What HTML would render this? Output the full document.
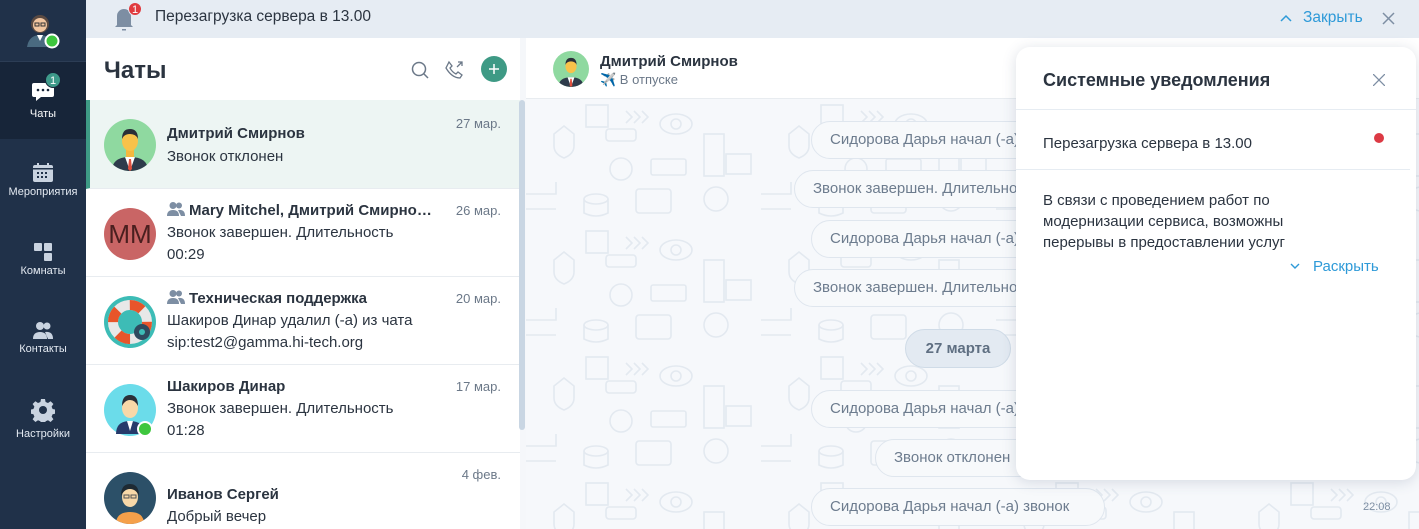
<!DOCTYPE html>
<html><head><meta charset="utf-8"><style>
*{box-sizing:border-box;margin:0;padding:0}
html,body{width:1419px;height:529px;overflow:hidden}
body{font-family:"Liberation Sans","DejaVu Sans",sans-serif;background:#f5f7fa;position:relative;color:#2a3440}
.abs{position:absolute}
.side{left:0;top:0;width:86px;height:529px;background:#203149}
.nav{position:absolute;left:0;width:86px;text-align:center;color:#fff;font-size:11px}
.nav svg{display:block;margin:0 auto 4px}
.topbar{left:86px;top:0;width:1333px;height:38px;background:#e6ecf3}
.list{left:86px;top:38px;width:434px;height:491px;background:#fff}
.item{position:absolute;left:0;width:434px;border-bottom:1px solid #e8ecf0}
.av{position:absolute;left:18px;width:52px;height:52px;border-radius:50%;overflow:hidden}
.name{position:absolute;left:81px;font-weight:bold;font-size:15px;color:#2b3440;white-space:nowrap}
.msg{position:absolute;left:81px;font-size:15px;color:#2b3440;line-height:22px}
.date{position:absolute;right:19px;font-size:13px;color:#6b7888}
.bubble{position:absolute;height:38px;border:1px solid #dfe6ee;border-radius:19px;background:#f7f9fb;font-size:15px;color:#6d7c8e;line-height:36px;padding-left:18px;white-space:nowrap;overflow:hidden}
</style></head><body>
<div class="abs side"></div>
<div class="abs" style="left:0;top:61px;width:86px;height:1px;background:#2c3d55"></div>
<div class="abs" style="left:0;top:62px;width:86px;height:77px;background:#172539"></div>
<svg class="abs" style="left:25px;top:11px" width="36" height="38" viewBox="0 0 36 38">
<circle cx="15" cy="13" r="9" fill="#5a4a42"/><circle cx="15" cy="14" r="7" fill="#f2c6a0"/>
<rect x="10" y="12" width="4" height="3" fill="none" stroke="#333" stroke-width="1"/><rect x="16" y="12" width="4" height="3" fill="none" stroke="#333" stroke-width="1"/>
<path d="M2 36 Q4 24 15 24 Q26 24 28 36Z" fill="#4a6a80"/><path d="M12 24 L15 30 L18 24Z" fill="#fff"/>
<circle cx="27" cy="30" r="6.5" fill="#3ec63e" stroke="#fff" stroke-width="2"/></svg>
<div class="nav" style="top:82px">
<svg width="22" height="20" viewBox="0 0 22 20"><path d="M2 1h18a2 2 0 0 1 2 2v10a2 2 0 0 1-2 2H9l-5 4v-4H2a2 2 0 0 1-2-2V3a2 2 0 0 1 2-2z" fill="#fff"/><circle cx="6" cy="8" r="1.3" fill="#172539"/><circle cx="11" cy="8" r="1.3" fill="#172539"/><circle cx="16" cy="8" r="1.3" fill="#172539"/></svg>
<span style="position:relative;top:2px">Чаты</span></div>
<div class="abs" style="left:45px;top:72px;width:16px;height:16px;border-radius:50%;background:#3e9a8a;color:#fff;font-size:11px;text-align:center;line-height:16px;border:1px solid #172539">1</div>
<div class="nav" style="top:163px;color:#e4eaf2"><svg width="20" height="19" viewBox="0 0 20 19"><rect x="0" y="2" width="20" height="17" rx="2" fill="#c9d3e0"/><rect x="4" y="0" width="2" height="4" fill="#c9d3e0"/><rect x="14" y="0" width="2" height="4" fill="#c9d3e0"/><rect x="0" y="5" width="20" height="1.5" fill="#203149"/><g fill="#203149"><rect x="4" y="9" width="2" height="2"/><rect x="8" y="9" width="2" height="2"/><rect x="12" y="9" width="2" height="2"/><rect x="4" y="13" width="2" height="2"/><rect x="8" y="13" width="2" height="2"/><rect x="12" y="13" width="2" height="2"/></g></svg>Мероприятия</div>
<div class="nav" style="top:243px;color:#e4eaf2"><svg width="18" height="18" viewBox="0 0 18 18"><rect x="0" y="0" width="8" height="8" rx="1" fill="#c9d3e0"/><rect x="10" y="0" width="8" height="8" rx="1" fill="#c9d3e0"/><rect x="10" y="10" width="8" height="8" rx="1" fill="#c9d3e0"/></svg>Комнаты</div>
<div class="nav" style="top:322px;color:#e4eaf2"><svg width="20" height="17" viewBox="0 0 20 17"><circle cx="7" cy="4" r="4" fill="#c9d3e0"/><circle cx="14" cy="4" r="3.5" fill="#c9d3e0"/><path d="M0 17q0-7 7-7t7 7z" fill="#c9d3e0"/><path d="M12 10q8 -1 8 7h-5z" fill="#c9d3e0"/></svg>Контакты</div>
<div class="nav" style="top:398px;color:#e4eaf2"><svg width="24" height="24" viewBox="0 0 24 24"><path fill="#c9d3e0" d="M10 1h4l.6 3 2.4 1 2.6-1.8 2.8 2.8-1.8 2.6 1 2.4 3 .6v4l-3 .6-1 2.4 1.8 2.6-2.8 2.8-2.6-1.8-2.4 1-.6 3h-4l-.6-3-2.4-1-2.6 1.8-2.8-2.8 1.8-2.6-1-2.4-3-.6v-4l3-.6 1-2.4-1.8-2.6 2.8-2.8 2.6 1.8 2.4-1z"/><circle cx="12" cy="12" r="4" fill="#203149"/></svg><span style="position:relative;top:2px">Настройки</span></div>

<div class="abs topbar"></div>
<svg class="abs" style="left:112px;top:2px" width="32" height="30" viewBox="0 0 32 30"><path d="M5 23v-9a7 7 0 0 1 14 0v9l2 2H3z" fill="#7d8ea3"/><rect x="10" y="27" width="4" height="1.5" fill="#7d8ea3"/><circle cx="23" cy="7" r="6.5" fill="#e03a3e" stroke="#e6ecf3" stroke-width="1"/><text x="23" y="11" font-size="11" fill="#fff" text-anchor="middle" font-family="Liberation Sans">1</text></svg>
<div class="abs" style="left:155px;top:8px;font-size:15.5px;color:#2b3440">Перезагрузка сервера в 13.00</div>
<svg class="abs" style="left:1280px;top:14px" width="12" height="8" viewBox="0 0 12 8"><path d="M1 7l5-5 5 5" fill="none" stroke="#2e9ad8" stroke-width="1.5"/></svg>
<div class="abs" style="left:1303px;top:9px;font-size:15.5px;color:#2e9ad8">Закрыть</div>
<svg class="abs" style="left:1382px;top:12px" width="13" height="13" viewBox="0 0 13 13"><path d="M1 1l11 11M12 1L1 12" stroke="#7d8ea3" stroke-width="1.5"/></svg>

<div class="abs list">
<div class="abs" style="left:18px;top:19px;font-size:24px;font-weight:bold;color:#2b3440">Чаты</div>
<svg class="abs" style="left:325px;top:23px" width="18" height="18" viewBox="0 0 18 18"><circle cx="8" cy="8" r="6.5" fill="none" stroke="#6b7888" stroke-width="1.5"/><path d="M13 13l4 4" stroke="#6b7888" stroke-width="1.5"/></svg>
<svg class="abs" style="left:359px;top:22px" width="19" height="19" viewBox="0 0 19 19"><path d="M4 2l3 4-2 2q2 4 6 6l2-2 4 3-2 3q-8 0-14-10z" fill="none" stroke="#6b7888" stroke-width="1.3"/><path d="M12 7l5-5M13 2h4v4" fill="none" stroke="#6b7888" stroke-width="1.3"/></svg>
<div class="abs" style="left:395px;top:18px;width:26px;height:26px;border-radius:50%;background:#3e9a85"></div>
<svg class="abs" style="left:401px;top:24px" width="14" height="14"><path d="M7 2v10M2 7h10" stroke="#fff" stroke-width="1.5"/></svg>

<div class="item" style="top:62px;height:89px;background:#edf5f3;border-left:4px solid #3e9a85">
<div class="av" style="left:14px;top:19px;background:#8fd9a0"><svg width="52" height="52" viewBox="0 0 52 52"><path d="M8 52q0-14 18-14t18 14z" fill="#2e3b4b"/><path d="M21 38l5 14 5-14z" fill="#fff"/><path d="M25 40h2l1 10-2 2-2-2z" fill="#e0503e"/><rect x="22" y="30" width="8" height="8" fill="#f5b83e"/><ellipse cx="26" cy="22" rx="8" ry="10" fill="#f8c24a"/><path d="M18 20q0-10 8-10t8 10q-2-5-8-5t-8 5z" fill="#2a2f38"/></svg></div>
<div class="name" style="left:77px;top:25px">Дмитрий Смирнов</div>
<div class="msg" style="left:77px;top:46px">Звонок отклонен</div>
<div class="date" style="top:16px">27 мар.</div></div>

<div class="item" style="top:151px;height:88px">
<div class="av" style="top:19px;background:#c96565;color:#4a1f1f;font-size:26px;text-align:center;line-height:52px">MM</div>
<svg class="abs" style="left:81px;top:13px" width="18" height="14" viewBox="0 0 18 14"><circle cx="6" cy="3.5" r="3.5" fill="#7d8ea3"/><circle cx="12" cy="3.5" r="3" fill="#7d8ea3"/><path d="M0 14q0-6 6-6t6 6z" fill="#7d8ea3"/><path d="M11 8q7-1 7 6h-4z" fill="#7d8ea3"/></svg>
<div class="name" style="left:103px;top:13px;width:248px;overflow:hidden;text-overflow:ellipsis">Mary Mitchel, Дмитрий Смирнов, Иван</div>
<div class="msg" style="top:33px">Звонок завершен. Длительность<br>00:29</div>
<div class="date" style="top:14px">26 мар.</div></div>

<div class="item" style="top:239px;height:88px">
<div class="av" style="top:19px;background:#3dbcb6"><svg width="52" height="52" viewBox="0 0 52 52"><circle cx="26" cy="26" r="17" fill="none" stroke="#e8e8e8" stroke-width="10"/><circle cx="26" cy="26" r="17" fill="none" stroke="#e8552a" stroke-width="10" stroke-dasharray="13.3 13.3"/><circle cx="38" cy="36" r="8" fill="#2e4a5e"/><circle cx="38" cy="36" r="3" fill="#3dbcb6"/></svg></div>
<svg class="abs" style="left:81px;top:13px" width="18" height="14" viewBox="0 0 18 14"><circle cx="6" cy="3.5" r="3.5" fill="#7d8ea3"/><circle cx="12" cy="3.5" r="3" fill="#7d8ea3"/><path d="M0 14q0-6 6-6t6 6z" fill="#7d8ea3"/><path d="M11 8q7-1 7 6h-4z" fill="#7d8ea3"/></svg>
<div class="name" style="left:103px;top:13px">Техническая поддержка</div>
<div class="msg" style="top:33px">Шакиров Динар удалил (-а) из чата<br>sip:test2@gamma.hi-tech.org</div>
<div class="date" style="top:14px">20 мар.</div></div>

<div class="item" style="top:327px;height:88px">
<div class="av" style="top:19px;background:#6bdcea;overflow:visible"><svg width="52" height="52" viewBox="0 0 52 52"><path d="M12 50q0-13 14-13t14 13z" fill="#263a6a"/><path d="M23 37l3 10 3-10z" fill="#fff"/><ellipse cx="26" cy="24" rx="8" ry="10" fill="#f8d8a8"/><path d="M18 22q0-11 8-11t8 11q-3-6-8-6t-8 6z" fill="#2a2f38"/></svg></div>
<div class="abs" style="left:51px;top:56px;width:16px;height:16px;border-radius:50%;background:#3ec63e;border:2px solid #fff"></div>
<div class="name" style="top:13px">Шакиров Динар</div>
<div class="msg" style="top:33px">Звонок завершен. Длительность<br>01:28</div>
<div class="date" style="top:14px">17 мар.</div></div>

<div class="item" style="top:415px;height:88px;border:none">
<div class="av" style="top:19px;background:#2c5068"><svg width="52" height="52" viewBox="0 0 52 52"><path d="M12 52q0-12 14-12t14 12z" fill="#f5a04a"/><ellipse cx="26" cy="25" rx="8" ry="10" fill="#f8d8a8"/><path d="M17 24q0-12 9-12t9 12q-3-7-9-7t-9 7z" fill="#1e2a33"/><rect x="20" y="23" width="5" height="3" fill="none" stroke="#555" stroke-width="1"/><rect x="27" y="23" width="5" height="3" fill="none" stroke="#555" stroke-width="1"/></svg></div>
<div class="name" style="top:33px">Иванов Сергей</div>
<div class="msg" style="top:53px">Добрый вечер</div>
<div class="date" style="top:14px">4 фев.</div></div>
</div>
<div class="abs" style="left:519px;top:100px;width:6px;height:330px;background:#c9d6e3;border-radius:3px"></div>

<!-- pattern bg -->
<svg class="abs" style="left:526px;top:99px" width="893" height="430">
<defs><pattern id="p" width="235" height="126" patternUnits="userSpaceOnUse">
<g fill="none" stroke="#e3e9f0" stroke-width="1.6">
<path d="M28 35l10-8 10 8v12q0 8-10 12q-10-4-10-12z"/>
<rect x="60" y="6" width="22" height="22"/>
<path d="M100 12l6 6-6 6M108 12l6 6-6 6M116 12l6 6-6 6"/>
<ellipse cx="150" cy="25" rx="16" ry="10"/><circle cx="150" cy="25" r="5"/>
<rect x="80" y="30" width="30" height="12" rx="3"/>
<circle cx="95" cy="70" r="11"/>
<rect x="125" y="60" width="35" height="16" rx="2"/>
<rect x="178" y="35" width="20" height="42"/>
<rect x="200" y="55" width="25" height="20"/>
<path d="M0 95h30v-12M0 110h30"/>
<ellipse cx="70" cy="100" rx="12" ry="5"/><path d="M58 100v14q12 6 24 0v-14"/>
<rect x="110" y="90" width="35" height="24" rx="3"/>
<circle cx="190" cy="100" r="12"/>
</g></pattern></defs>
<rect width="893" height="430" fill="#f6f8fb"/><rect width="893" height="430" fill="url(#p)"/>
</svg>

<div class="abs" style="left:526px;top:38px;width:893px;height:61px;background:#fff;border-bottom:1px solid #e8ecf0"></div>
<div class="abs" style="left:553px;top:51px;width:36px;height:36px;border-radius:50%;overflow:hidden;background:#8fd9a0"><svg width="36" height="36" viewBox="0 0 52 52"><path d="M8 52q0-14 18-14t18 14z" fill="#2e3b4b"/><path d="M21 38l5 14 5-14z" fill="#fff"/><path d="M25 40h2l1 10-2 2-2-2z" fill="#e0503e"/><ellipse cx="26" cy="22" rx="8" ry="10" fill="#f8c24a"/><path d="M18 20q0-10 8-10t8 10q-2-5-8-5t-8 5z" fill="#2a2f38"/></svg></div>
<div class="abs" style="left:600px;top:53px;font-size:15px;font-weight:bold;color:#2b3440">Дмитрий Смирнов</div>
<div class="abs" style="left:600px;top:72px;font-size:13px;color:#6b7888">✈️ В отпуске</div>

<div class="bubble" style="left:811px;top:121px;width:300px">Сидорова Дарья начал (-а) звонок</div>
<div class="bubble" style="left:794px;top:170px;width:300px">Звонок завершен. Длительность</div>
<div class="bubble" style="left:811px;top:220px;width:300px">Сидорова Дарья начал (-а) звонок</div>
<div class="bubble" style="left:794px;top:269px;width:300px">Звонок завершен. Длительность</div>
<div class="abs" style="left:905px;top:329px;width:106px;height:39px;border-radius:20px;background:#e3eaf2;border:1px solid #cfdbe7;font-size:15px;font-weight:bold;color:#5f6f82;text-align:center;line-height:37px">27 марта</div>
<div class="bubble" style="left:811px;top:390px;width:300px">Сидорова Дарья начал (-а) звонок</div>
<div class="bubble" style="left:875px;top:439px;width:300px">Звонок отклонен</div>
<div class="bubble" style="left:811px;top:488px;width:294px">Сидорова Дарья начал (-а) звонок</div>
<div class="abs" style="left:1363px;top:501px;font-size:11px;color:#7d8ea3">22:08</div>

<div class="abs" style="left:1016px;top:47px;width:400px;height:433px;background:#fff;border-radius:14px;box-shadow:0 2px 14px rgba(60,80,110,.18)">
<div class="abs" style="left:27px;top:23px;font-size:18px;font-weight:bold;color:#2b3440">Системные уведомления</div>
<svg class="abs" style="left:357px;top:27px" width="12" height="12"><path d="M0 0l12 12M12 0L0 12" stroke="#7d8ea3" stroke-width="1.3"/></svg>
<div class="abs" style="left:0;top:62px;width:400px;height:1px;background:#e6ecf2"></div>
<div class="abs" style="left:27px;top:88px;font-size:15px;color:#2b3440">Перезагрузка сервера в 13.00</div>
<div class="abs" style="left:358px;top:86px;width:10px;height:10px;border-radius:50%;background:#dc3a44"></div>
<div class="abs" style="left:0;top:122px;width:394px;height:1px;background:#e6ecf2"></div>
<div class="abs" style="left:27px;top:143px;font-size:15px;color:#2b3440;line-height:21px">В связи с проведением работ по<br>модернизации сервиса, возможны<br>перерывы в предоставлении услуг</div>
<svg class="abs" style="left:274px;top:216px" width="10" height="7"><path d="M1 1l4 4 4-4" fill="none" stroke="#2e9ad8" stroke-width="1.4"/></svg>
<div class="abs" style="left:297px;top:211px;font-size:15px;color:#2e9ad8">Раскрыть</div>
</div>
</body></html>
